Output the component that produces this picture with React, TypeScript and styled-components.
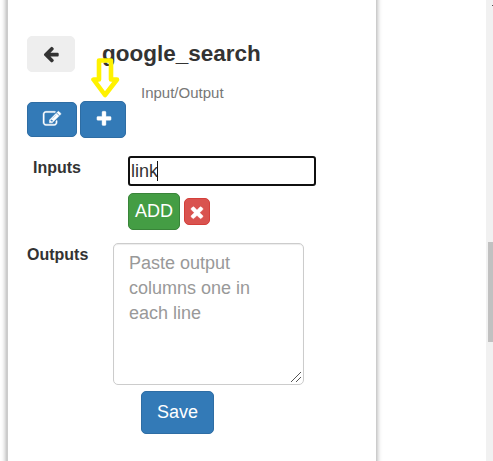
import React from "react";
import styled, { createGlobalStyle } from "styled-components";

const GlobalStyle = createGlobalStyle`
  *, *::before, *::after { box-sizing: border-box; }
  html, body { margin: 0; height: 461px; overflow: hidden; background: #fff; }
  body { font-family: "Liberation Sans", Arial, sans-serif; font-size: 18px; color: #333; }
`;

const Page = styled.div`
  display: flex;
  height: 461px;
  overflow: hidden;
`;

const Card = styled.main`
  width: 371px;
  height: 481px;
  margin: -10px 0 0 6px;
  padding: 45px 0 0 19px;
  border: 1px solid #ccc;
  border-width: 1px 1px 1px 2px;
  background: #fff;
  box-shadow: 0 0 5px rgba(0, 0, 0, 0.35);
  flex: none;
`;

const Scrollbar = styled.div`
  width: 7px;
  height: 461px;
  margin-left: auto;
  padding: 242px 0 0 2px;
  background: #f1f1f1;
  position: relative;
`;

const Thumb = styled.div`
  height: 100px;
  background: #c1c1c1;
`;

const ScrollArrow = styled.span`
  position: absolute;
  top: 5px;
  right: 0;
  width: 1px;
  height: 1px;
  background: #505050;
`;

const Header = styled.header`
  display: flex;
  height: 65px;
`;

const Heading = styled.div`
  margin-left: 27px;
`;

const Title = styled.h1`
  margin: 5px 0 0;
  font-size: 22.5px;
  line-height: 26px;
  font-weight: bold;
`;

const Subtitle = styled.div`
  margin: 17px 0 0 39px;
  font-size: 15px;
  line-height: 18px;
  color: #777;
`;

const tones = {
  plain: ["#eee", "#eee", "#333"],
  primary: ["#337ab7", "#2e6da4", "#fff"],
  success: ["#449d44", "#398439", "#fff"],
  danger: ["#d9534f", "#d43f3a", "#fff"],
};

const Button = styled.button<{ $tone: keyof typeof tones; $w: number; $h: number }>`
  display: flex;
  align-items: center;
  justify-content: center;
  flex: none;
  width: ${(p) => p.$w}px;
  height: ${(p) => p.$h}px;
  padding: 0;
  border: 1px solid ${(p) => tones[p.$tone][1]};
  border-radius: 5px;
  background: ${(p) => tones[p.$tone][0]};
  color: ${(p) => tones[p.$tone][2]};
  font: 18px "Liberation Sans", Arial, sans-serif;
`;

const AddButton = styled(Button)`
  padding: 0 0 2px 1px;
`;

const EditButton = styled(Button)`
  padding-bottom: 2px;
`;

const Toolbar = styled.div`
  display: flex;
  align-items: center;
  gap: 3px;
  height: 37px;
  position: relative;
`;

const Pointer = styled.svg`
  position: absolute;
  left: 64px;
  top: -43px;
`;

const InputsRow = styled.div`
  display: flex;
  margin-top: 18px;
  height: 74px;
`;

const Label = styled.label<{ $w: number; $indent?: number }>`
  flex: none;
  width: ${(p) => p.$w}px;
  padding: 2px 0 0 ${(p) => p.$indent || 0}px;
  font-size: 16px;
  line-height: 20px;
  font-weight: bold;
`;

const TextField = styled.div`
  display: flex;
  align-items: center;
  width: 188px;
  height: 30px;
  padding-left: 1px;
  border: 2px solid #101010;
  border-radius: 3px;
  line-height: 20px;
`;

const Caret = styled.span`
  width: 1px;
  height: 20px;
  margin-left: -1px;
  background: #111;
`;

const Actions = styled.div`
  display: flex;
  align-items: center;
  gap: 4px;
  height: 37px;
  margin-top: 7px;
`;

const OutputsRow = styled.div`
  display: flex;
  margin-top: 13px;
`;

const OutputBox = styled.div`
  position: relative;
`;

const OutputArea = styled.textarea`
  display: block;
  width: 191px;
  height: 142px;
  margin: 0;
  padding: 7px 15px;
  border: 1px solid #ccc;
  border-radius: 5px;
  box-shadow: inset 0 1px 1px rgba(0, 0, 0, 0.075);
  font: 18px/25px "Liberation Sans", Arial, sans-serif;
  outline: none;
  overflow: hidden;
  resize: none;
  &::placeholder { color: #999; opacity: 1; }
`;

const Grip = styled.svg`
  position: absolute;
  right: 3px;
  bottom: 3px;
  pointer-events: none;
`;

const Footer = styled.footer`
  padding: 6px 0 0 114px;
`;

const paths = {
  back: "M1664 896v128q0 53-32.5 90.5t-84.5 37.5h-704l293 294q38 36 38 90t-38 90l-75 76q-37 37-90 37-52 0-91-37l-651-652q-37-37-37-90 0-52 37-91l651-650q38-38 91-38 52 0 90 38l75 74q38 38 38 91t-38 91l-293 293h704q52 0 84.5 37.5t32.5 90.5z",
  edit: "M888 1184l116-116-152-152-116 116v56h96v96h56zm440-720q-16-16-33 1l-350 350q-17 17-1 33t33-1l350-350q17-17 1-33zm80 594v190q0 119-84.5 203.5t-203.5 84.5h-832q-119 0-203.5-84.5t-84.5-203.5v-832q0-119 84.5-203.5t203.5-84.5h832q63 0 117 25 15 7 18 23 3 17-9 29l-49 49q-14 14-32 8-23-6-45-6h-832q-66 0-113 47t-47 113v832q0 66 47 113t113 47h832q66 0 113-47t47-113v-126q0-13 9-22l64-64q15-15 35-7t20 29zm-96-738l288 288-672 672h-288v-288zm444 132l-92 92-288-288 92-92q28-28 68-28t68 28l152 152q28 28 28 68t-28 68z",
  plus: "M1600 736v192q0 40-28 68t-68 28h-416v416q0 40-28 68t-68 28h-192q-40 0-68-28t-28-68v-416h-416q-40 0-68-28t-28-68v-192q0-40 28-68t68-28h416v-416q0-40 28-68t68-28h192q40 0 68 28t28 68v416h416q40 0 68 28t28 68z",
  times: "M1490 1322q0 40-28 68l-136 136q-28 28-68 28t-68-28l-294-294-294 294q-28 28-68 28t-68-28l-136-136q-28-28-28-68t28-68l294-294-294-294q-28-28-28-68t28-68l136-136q28-28 68-28t68 28l294 294 294-294q28-28 68-28t68 28l136 136q28 28 28 68t-28 68l-294 294 294 294q28 28 28 68z",
};

function Icon({ name, size = 18, weight = 0 }: { name: keyof typeof paths; size?: number; weight?: number }) {
  return (
    <svg width={size} height={size} viewBox="0 0 1792 1792" fill="currentColor" stroke="currentColor" strokeWidth={weight} overflow="visible" aria-hidden="true">
      <path d={paths[name]} />
    </svg>
  );
}

export default function App() {
  return (
    <Page>
      <GlobalStyle />
      <Card>
        <Header>
          <Button $tone="plain" $w={48} $h={36} aria-label="Back"><Icon name="back" /></Button>
          <Heading>
            <Title>google_search</Title>
            <Subtitle>Input/Output</Subtitle>
          </Heading>
        </Header>
        <Toolbar>
          <EditButton $tone="primary" $w={50} $h={35} aria-label="Edit"><Icon name="edit" weight={40} /></EditButton>
          <AddButton $tone="primary" $w={46} $h={37} aria-label="Add"><Icon name="plus" weight={40} /></AddButton>
          <Pointer width="29" height="42" viewBox="0 0 29 42" fill="none" stroke="#fff200" strokeWidth="4.6" strokeLinejoin="round">
            <path d="M8 2.5H20V21.5H26L14 37L2.5 21.5H8Z" />
          </Pointer>
        </Toolbar>
        <InputsRow>
          <Label $w={101} $indent={6}>Inputs</Label>
          <div>
            <TextField>link<Caret /></TextField>
            <Actions>
              <Button $tone="success" $w={52} $h={37}>ADD</Button>
              <Button $tone="danger" $w={26} $h={27} aria-label="Remove"><Icon name="times" weight={40} /></Button>
            </Actions>
          </div>
        </InputsRow>
        <OutputsRow>
          <Label $w={86}>Outputs</Label>
          <OutputBox>
            <OutputArea placeholder="Paste output columns one in each line" />
            <Grip width="10" height="10" viewBox="0 0 10 10" stroke="#555" strokeWidth="1">
              <path d="M0 10L10 0M5 10L10 5" />
            </Grip>
          </OutputBox>
        </OutputsRow>
        <Footer>
          <Button $tone="primary" $w={73} $h={43}>Save</Button>
        </Footer>
      </Card>
      <Scrollbar><ScrollArrow /><Thumb /></Scrollbar>
    </Page>
  );
}
